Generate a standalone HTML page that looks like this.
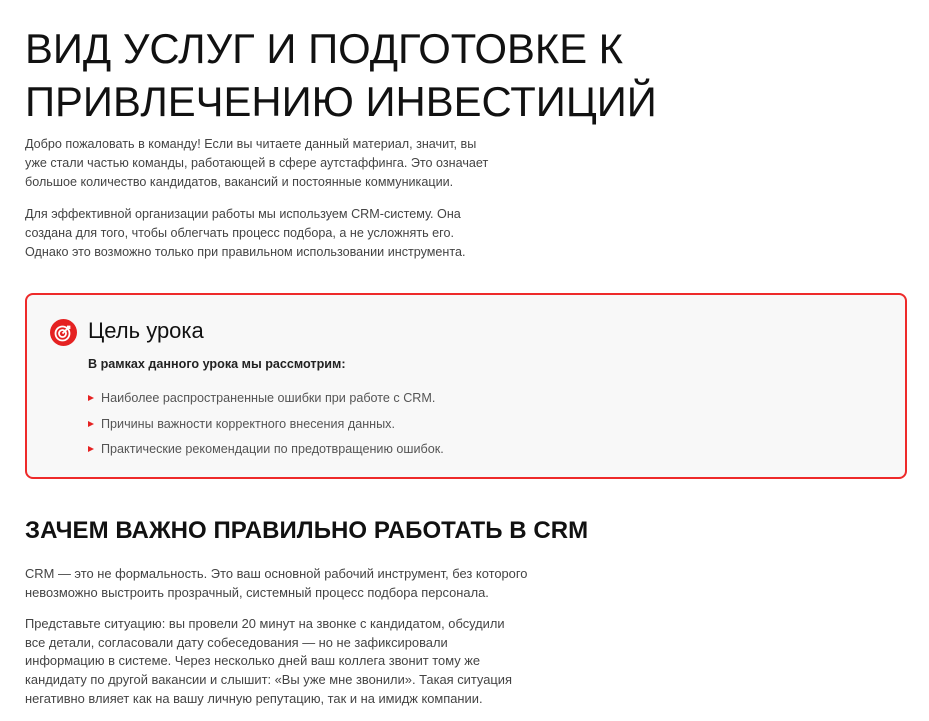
<!DOCTYPE html>
<html><head><meta charset="utf-8"><style>
body{margin:0;background:#fff;font-family:"Liberation Sans",sans-serif;width:929px;height:721px;overflow:hidden;position:relative}
.a{position:absolute;white-space:nowrap}
h1{position:absolute;left:25px;top:22px;margin:0;font-weight:400;font-size:41.8px;line-height:53px;color:#111;letter-spacing:0}
.p{position:absolute;left:25px;font-size:12.6px;line-height:19px;color:#444;white-space:nowrap}
.box{position:absolute;left:25px;top:293px;width:878px;height:182px;border:2px solid #ee2a2a;border-radius:8px;background:#f8f8f8}
.li{position:absolute;left:101px;font-size:12.6px;color:#555;white-space:nowrap}
.tri{position:absolute;left:88px;width:0;height:0;border-left:6px solid #e52222;border-top:3.5px solid transparent;border-bottom:3.5px solid transparent}
.q{position:absolute;left:25px;font-size:12.9px;line-height:18.7px;color:#444;white-space:nowrap;letter-spacing:0}
</style></head><body>
<h1>ВИД УСЛУГ И ПОДГОТОВКЕ К<br>ПРИВЛЕЧЕНИЮ ИНВЕСТИЦИЙ</h1>
<div class="p" style="top:135px">Добро пожаловать в команду! Если вы читаете данный материал, значит, вы<br>уже стали частью команды, работающей в сфере аутстаффинга. Это означает<br>большое количество кандидатов, вакансий и постоянные коммуникации.</div>
<div class="p" style="top:205px">Для эффективной организации работы мы используем CRM-систему. Она<br>создана для того, чтобы облегчать процесс подбора, а не усложнять его.<br>Однако это возможно только при правильном использовании инструмента.</div>
<div class="box"></div>
<svg class="a" style="left:50px;top:319px" width="27" height="27" viewBox="0 0 27 27"><circle cx="13.5" cy="13.5" r="13.5" fill="#e52222"/><circle cx="12.5" cy="14.5" r="7" fill="none" stroke="#fff" stroke-width="1.8"/><circle cx="12.5" cy="14.5" r="3.5" fill="none" stroke="#fff" stroke-width="1.8"/><path d="M12.5 14.5L19 8M17 7.5h2.5v2.5" stroke="#fff" stroke-width="1.8" fill="none"/></svg>
<div class="a" style="left:88px;top:318px;font-size:22px;color:#111">Цель урока</div>
<div class="a" style="left:88px;top:357px;font-size:12.6px;font-weight:700;color:#222">В рамках данного урока мы рассмотрим:</div>
<div class="tri" style="top:395px"></div><div class="li" style="top:391px">Наиболее распространенные ошибки при работе с CRM.</div>
<div class="tri" style="top:421px"></div><div class="li" style="top:417px">Причины важности корректного внесения данных.</div>
<div class="tri" style="top:446px"></div><div class="li" style="top:442px">Практические рекомендации по предотвращению ошибок.</div>
<div class="a" style="left:25px;top:517px;font-size:24px;font-weight:700;color:#111;letter-spacing:0.05px">ЗАЧЕМ ВАЖНО ПРАВИЛЬНО РАБОТАТЬ В CRM</div>
<div class="q" style="top:565px">CRM — это не формальность. Это ваш основной рабочий инструмент, без которого<br>невозможно выстроить прозрачный, системный процесс подбора персонала.</div>
<div class="q" style="top:615px">Представьте ситуацию: вы провели 20 минут на звонке с кандидатом, обсудили<br>все детали, согласовали дату собеседования — но не зафиксировали<br>информацию в системе. Через несколько дней ваш коллега звонит тому же<br>кандидату по другой вакансии и слышит: «Вы уже мне звонили». Такая ситуация<br>негативно влияет как на вашу личную репутацию, так и на имидж компании.</div>
</body></html>
